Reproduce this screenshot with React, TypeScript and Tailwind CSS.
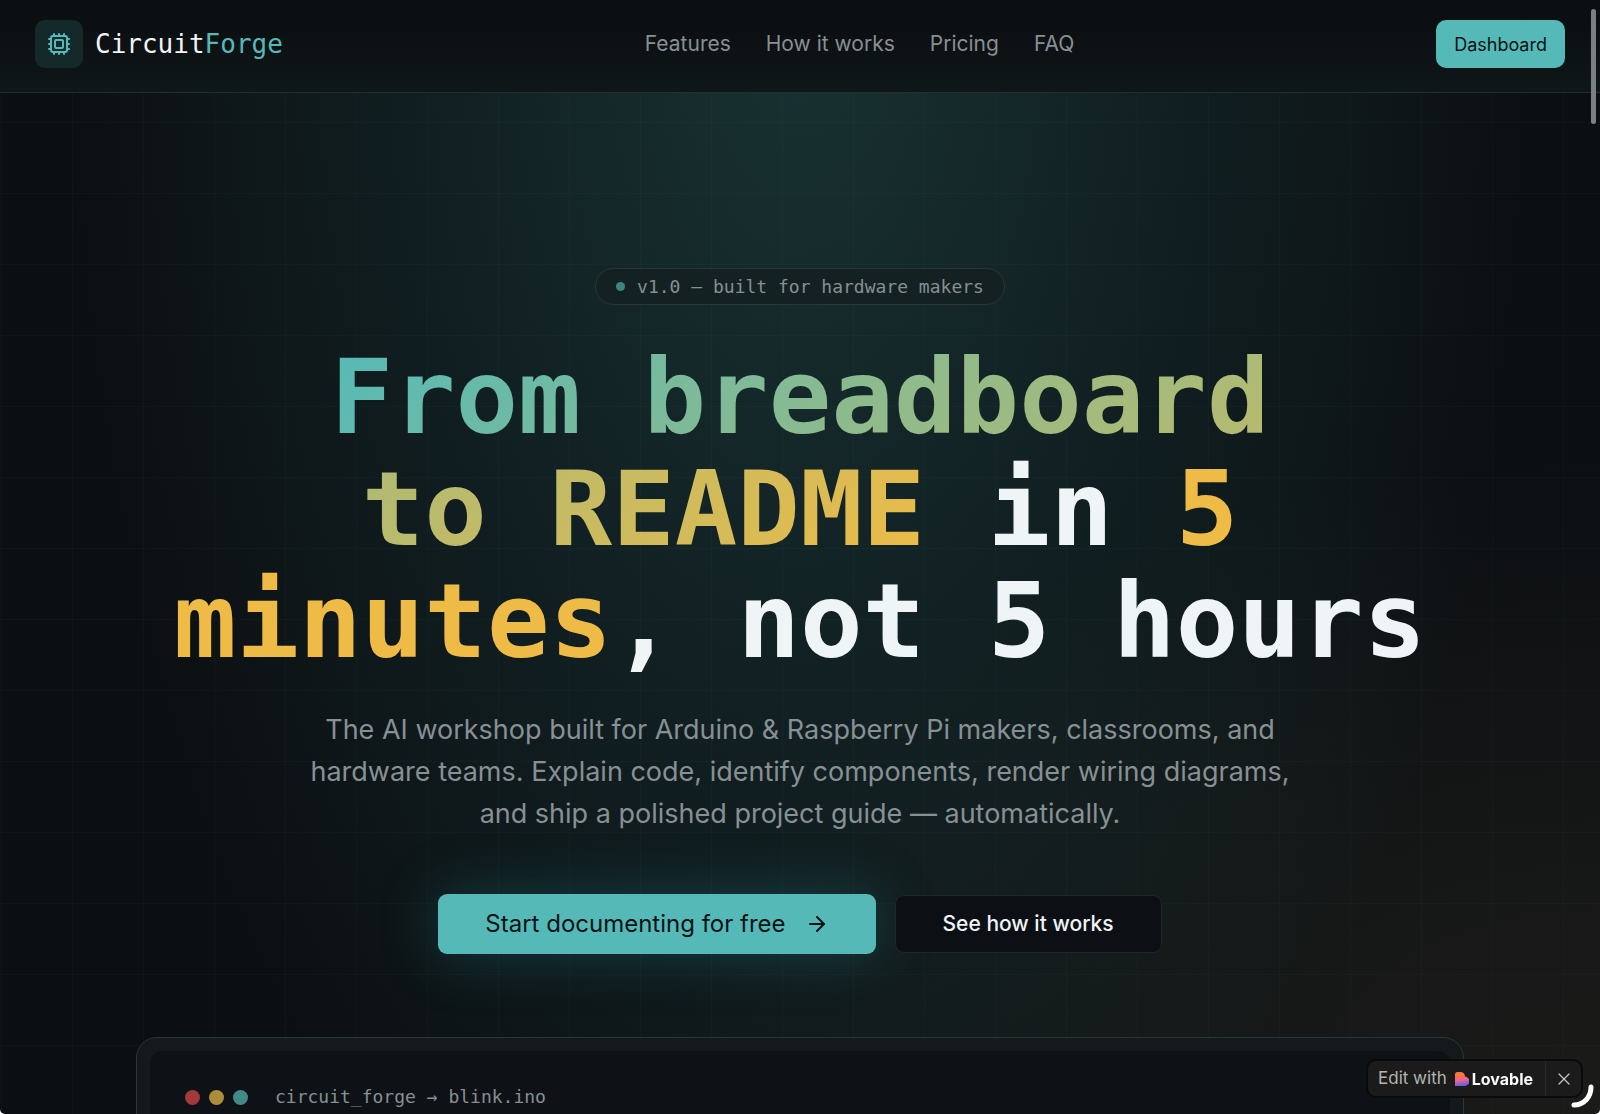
import type { ReactNode } from "react";
import { ArrowRight, Cpu, X } from "lucide-react";

const NAV_LINKS = [
  { label: "Features", href: "#features" },
  { label: "How it works", href: "#how-it-works" },
  { label: "Pricing", href: "#pricing" },
  { label: "FAQ", href: "#faq" },
];

function Mono({ className = "", children }: { className?: string; children: ReactNode }) {
  return (
    <span className={`font-['DejaVu_Sans_Mono',monospace] ${className}`}>
      {children}
    </span>
  );
}

function Header() {
  return (
    <header className="relative z-10 border-b border-[#232d2f] bg-linear-to-b from-[#0c0f12] from-30% to-[#0e1719]">
      <div className="flex items-center justify-between px-[35px] pt-5 pb-6">
        <a href="#top" className="flex items-center gap-3">
          <span className="flex size-12 items-center justify-center rounded-[10px] bg-[#142a2a] text-[#55bab7]">
            <Cpu size={24} />
          </span>
          <Mono className="text-[26px] leading-8 text-[#eff5f6]">
            Circuit<span className="text-[#55bab7]">Forge</span>
          </Mono>
        </a>

        <nav className="flex items-center gap-[35px] text-[21px] leading-7 text-[#879092]">
          {NAV_LINKS.map((link) => (
            <a key={link.href} href={link.href} className="hover:text-[#eff5f6]">
              {link.label}
            </a>
          ))}
        </nav>

        <button
          type="button"
          className="h-12 rounded-[10px] bg-[#55bab7] px-[18px] text-[18px] text-[#0c1216]"
        >
          Dashboard
        </button>
      </div>
    </header>
  );
}

function Hero() {
  return (
    <section className="relative flex flex-col items-center px-9 pt-[175px] text-center">
      {/* Version pill */}
      <div className="flex h-[37px] items-center gap-3 rounded-full border border-[#2a3638] bg-[#142123] px-5">
        <span className="size-[9px] rounded-full bg-[#3d867f]" />
        <Mono className="text-[18px] leading-6 text-[#859091]">
          v1.0 — built for hardware makers
        </Mono>
      </div>

      <h1 className="mt-9 max-w-[1365px] font-['DejaVu_Sans_Mono',monospace] text-[104px] leading-[112px] font-bold text-[#eff5f6]">
        <span className="bg-[linear-gradient(135deg,#55bab7,#edbb46)] bg-clip-text text-transparent">
          From breadboard
          <br />
          to README
        </span>{" "}
        in <span className="text-[#edbb46]">5 minutes</span>, not 5 hours
      </h1>

      <p className="mt-8 max-w-[1000px] text-[27px] leading-[42px] text-[#879092]">
        The AI workshop built for Arduino &amp; Raspberry Pi makers, classrooms,
        and hardware teams. Explain code, identify components, render wiring
        diagrams, and ship a polished project guide — automatically.
      </p>

      {/* Calls to action */}
      <div className="mt-[59px] flex items-center gap-[19px]">
        <button
          type="button"
          className="flex h-[60px] items-center gap-[19px] rounded-[9px] bg-[#55bab7] px-[47px] text-[24px] text-[#0c1216] shadow-[0_0_56px_rgba(34,130,140,0.35)]"
        >
          Start documenting for free
          <ArrowRight size={24} />
        </button>
        <button
          type="button"
          className="h-[58px] rounded-[9px] border border-[#1f2628] bg-[#0c1014] px-[47px] text-[21px] font-medium text-[#eff5f6]"
        >
          See how it works
        </button>
      </div>
    </section>
  );
}

function EditorPreview() {
  return (
    <section className="relative mt-[83px] px-[136px]">
      <div className="rounded-[21px] border border-[#2b3638] bg-[#14191b] p-[13px]">
        <div className="h-96 rounded-xl bg-[#0e1216] px-[35px] py-[34px]">
          <div className="flex items-center gap-[9px]">
            <span className="size-[15px] rounded-full bg-[#a13a38]" />
            <span className="size-[15px] rounded-full bg-[#ad8d39]" />
            <span className="size-[15px] rounded-full bg-[#408b85]" />
            <Mono className="ml-[18px] text-[18px] leading-6 text-[#859091]">
              circuit_forge → blink.ino
            </Mono>
          </div>
        </div>
      </div>
    </section>
  );
}

function LovableMark() {
  return (
    <svg viewBox="0 0 14 14" className="size-[14px]" aria-hidden="true">
      <defs>
        <linearGradient id="lovable" x1="0.3" y1="0" x2="0.45" y2="1">
          <stop offset="0.25" stopColor="#f9753a" />
          <stop offset="0.6" stopColor="#ec5f9f" />
          <stop offset="0.95" stopColor="#6a62d8" />
        </linearGradient>
      </defs>
      <path
        d="M0 2.500A2.500 2.500 0 0 1 2.500 0H5.500A4.500 4.500 0 0 1 10 4.500A4.700 4.700 0 0 1 9.300 14H0Z"
        fill="url(#lovable)"
      />
    </svg>
  );
}

function EditBadge() {
  return (
    <div className="fixed right-[17px] bottom-4 z-20 flex h-[39px] items-stretch rounded-[10px] border-2 border-[#0a0a0a] bg-[#1b1b1b]">
      <a href="#edit" className="flex items-center pr-3 pl-[10px] text-[17px] text-[#b4b4b2]">
        Edit with
        <span className="ml-2 flex items-center gap-[3px] text-[16px] font-bold text-[#fafafa]">
          <LovableMark />
          Lovable
        </span>
      </a>
      <button
        type="button"
        aria-label="Close"
        className="flex w-9 items-center justify-center border-l border-[#2a2a2a] text-[#c4c4c2]"
      >
        <X size={20} strokeWidth={1.5} />
      </button>
    </div>
  );
}

export default function App() {
  return (
    <div className="bg-white">
      <div className="relative h-screen overflow-hidden rounded-b-[5px] bg-[#0c0f12] font-[Inter,sans-serif]">
        {/* Teal glow from the top, amber glow from the lower right */}
        <div className="absolute inset-0 bg-[radial-gradient(ellipse_46%_130%_at_50%_0%,rgba(70,175,165,0.22),rgba(55,155,155,0.13)_45%,rgba(50,150,140,0.05)_80%,transparent),radial-gradient(ellipse_60%_60%_at_100%_100%,rgba(205,175,110,0.08),transparent)]" />
        {/* Grid lines */}
        <div className="absolute inset-0 bg-[linear-gradient(to_right,rgba(85,186,183,0.035)_1px,transparent_1px),linear-gradient(to_bottom,rgba(85,186,183,0.035)_1px,transparent_1px)] bg-size-[71px_71px] bg-position-[1px_51px]" />

        <Header />
        <main>
          <Hero />
          <EditorPreview />
        </main>
        <EditBadge />

        {/* Scroll thumb */}
        <div className="absolute top-[9px] right-1 z-20 h-[115px] w-[5px] rounded-full bg-[#7c8081]" />
        {/* Loading arc in the corner */}
        <svg
          viewBox="0 0 40 40"
          className="absolute right-0 bottom-0 z-30 size-10"
          aria-hidden="true"
        >
          <path
            d="M31 13C31 23 24 31 14 31"
            fill="none"
            stroke="#fff"
            strokeWidth="5"
            strokeLinecap="round"
          />
        </svg>
      </div>
    </div>
  );
}
